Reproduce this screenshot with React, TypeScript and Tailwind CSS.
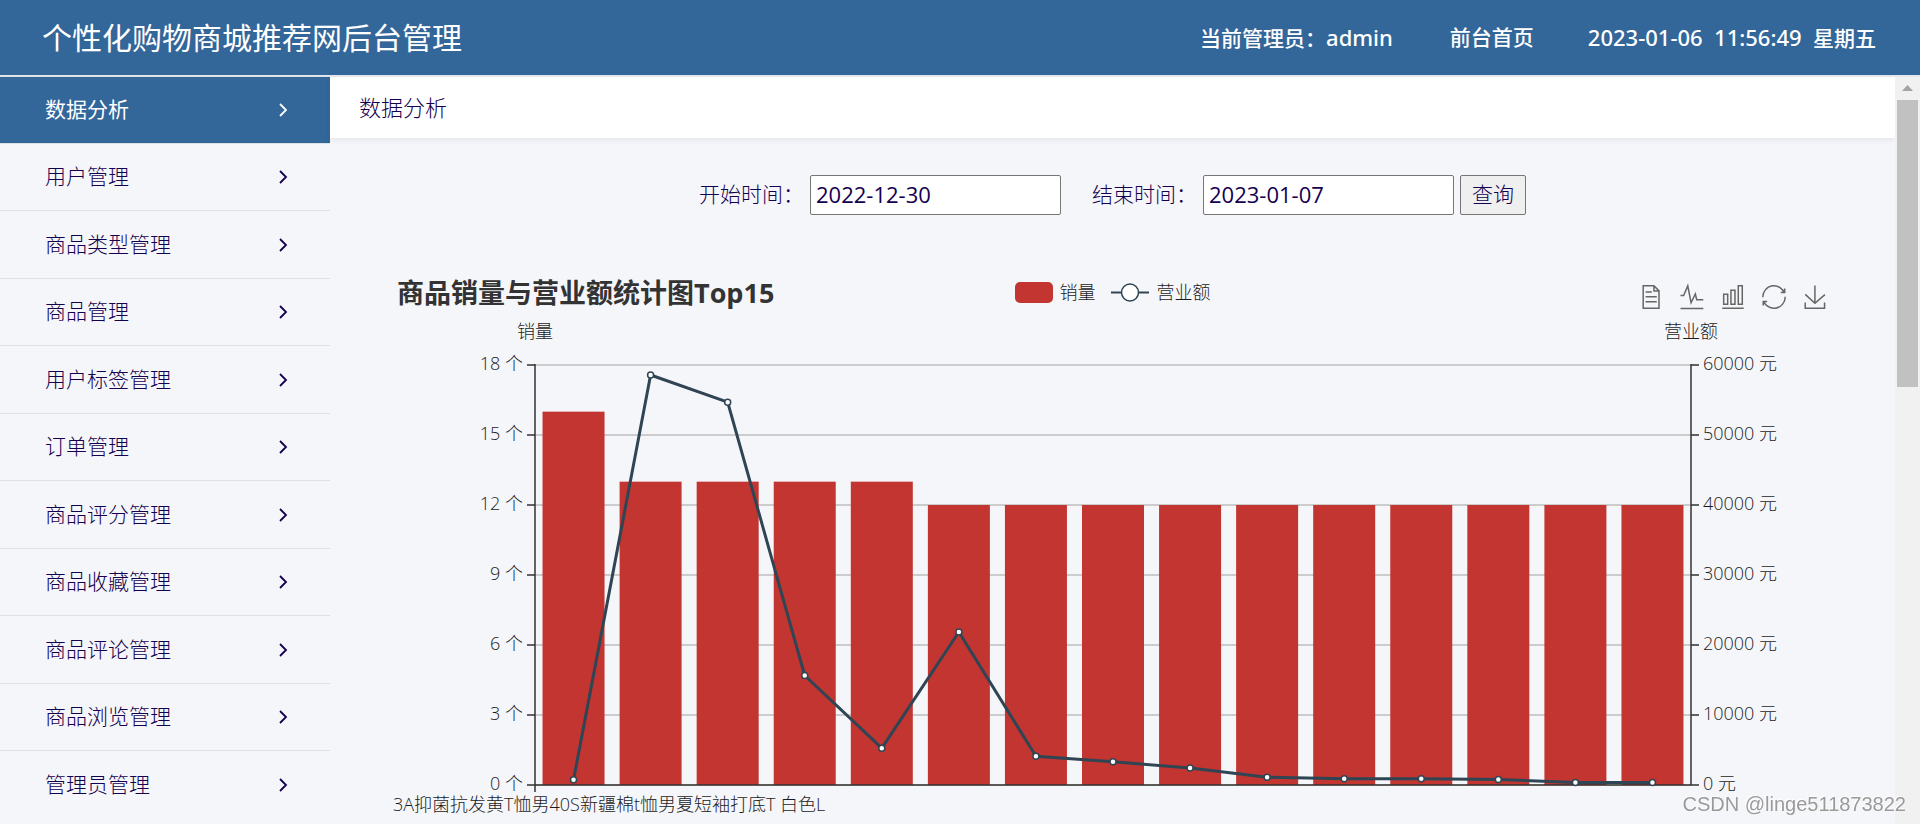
import { useState } from 'react';

const menu = [
    '数据分析',
    '用户管理',
    '商品类型管理',
    '商品管理',
    '用户标签管理',
    '订单管理',
    '商品评分管理',
    '商品收藏管理',
    '商品评论管理',
    '商品浏览管理',
    '管理员管理',
];

const sales = [16, 13, 13, 13, 13, 12, 12, 12, 12, 12, 12, 12, 12, 12, 12];
const revenue = [740, 58570, 54690, 15640, 5260, 21860, 4110, 3310, 2430, 1110, 890, 890, 790, 360, 350];

// plot area inside the svg
const LEFT = 145;
const RIGHT = 1301;
const TOP = 46;
const BOTTOM = 466;
const SLOT = (RIGHT - LEFT) / sales.length;
const BAR = 62;

const tools = [
    { name: '数据视图', box: '1 0 60 60', path: 'M17.5,17.3H33 M45.4,29.5h-28 M11.5,2v56H51V14.8L38.4,2H11.5z M38.4,2.2v12.7H51 M45.4,41.7h-28' },
    { name: '切换为折线图', box: '3 5 54 54', path: 'M4.1,28.9h7.1l9.3-22l7.4,38l9.7-19.7l3,12.8h14.9M4.1,58h51.4' },
    { name: '切换为柱状图', box: '0 0 60 60', path: 'M6.7,22.9h10V48h-10V22.9zM24.9,13h10v35h-10V13zM43.2,2h10v46h-10V2zM3.1,58h53.7' },
    { name: '还原', box: '0 0 60 60', path: 'M47,18.9h9.8V8.7 M56.3,20.1C52.1,9,40.5,0.6,26.8,2.1C12.6,3.7,1.6,16.2,2.1,30.6 M13,41.1H3.1v10.2 M3.7,39.9c4.2,11.1,15.8,19.5,29.5,18c14.2-1.6,25.2-14.1,24.7-28.5' },
    { name: '保存为图片', box: '-1 -1 61 61', path: 'M4.7,22.9L29.3,45.5L54.7,23.4M4.6,43.6L4.6,58L53.8,58L53.8,43.6M29.3,45.1L29.3,0' },
];

function Header() {
    return (
        <header className="h-[75px] shrink-0 bg-[#336699] text-white flex items-center justify-between pl-[42px] pr-11">
            <h1 className="text-[30px] leading-none">个性化购物商城推荐网后台管理</h1>
            <div className="flex items-center text-[21px] leading-none whitespace-pre font-medium font-['Noto_Sans','Noto_Sans_CJK_SC',sans-serif]">
                <span>当前管理员：<span className="text-[22px]">admin</span></span>
                <a href="#" className="ml-[57px]">前台首页</a>
                <span className="ml-[54px]"><span className="text-[22px]">2023-01-06  11:56:49  </span>星期五</span>
            </div>
        </header>
    );
}

function Sidebar({ active, setActive }: { active: number, setActive: (i: number) => void }) {
    return (
        <nav className="w-[330px] shrink-0 -mt-px">
            <ul>
                {menu.map((m, i) => (
                    <li key={m} className="h-[67px] odd:h-[68px] border-b border-[#dbe2e7] first:border-t last:border-b-0">
                        <a
                            href="#"
                            onClick={() => setActive(i)}
                            className={`h-full flex items-center justify-between pl-[45px] pr-10 text-[21px] ${i === active ? 'bg-[#336699] text-white' : 'font-light text-[#14004f]'}`}
                        >
                            {m}
                            <svg width="14" height="18" viewBox="0 0 14 18" fill="none" stroke="currentColor" strokeWidth="1.8">
                                <path d="M4 3L10 9L4 15" />
                            </svg>
                        </a>
                    </li>
                ))}
            </ul>
        </nav>
    );
}

function Filter() {
    const [from, setFrom] = useState('2022-12-30');
    const [to, setTo] = useState('2023-01-07');
    const field = 'w-[251px] h-10 ml-1.5 px-[5px] pb-0.5 bg-white border border-[#767676] rounded-xs text-[22px] font-normal';
    return (
        <form onSubmit={e => e.preventDefault()} className="mt-[37px] flex justify-center items-center text-[21px] font-light text-[#14004f]">
            <label htmlFor="from">开始时间：</label>
            <input id="from" value={from} onChange={e => setFrom(e.target.value)} className={field} />
            <label htmlFor="to" className="ml-[31px]">结束时间：</label>
            <input id="to" value={to} onChange={e => setTo(e.target.value)} className={field} />
            <button className="h-10 w-[66px] ml-1.5 bg-[#efefef] border border-[#767676] rounded-xs">查询</button>
        </form>
    );
}

function Chart() {
    const y = (v: number, max: number) => BOTTOM - (v / max) * (BOTTOM - TOP);
    const points = revenue.map((v, i) => [LEFT + SLOT * (i + 0.5), y(v, 60000)]);
    const ticks = [0, 1, 2, 3, 4, 5, 6];
    return (
        <section className="mt-[59px] px-[60px] text-[#1c1c1c] font-light">
            <div className="h-[45px] pt-1 px-[7px] grid grid-cols-[1fr_auto_1fr] items-start">
                <h2 className="text-[27px] leading-[30px] font-bold text-[#333]">商品销量与营业额统计图Top15</h2>
                <div className="h-7 flex items-center text-[18px]">
                    <span className="w-[38px] h-[21px] rounded-[5px] bg-[#c23531]"></span>
                    <span className="ml-[7px]">销量</span>
                    <svg className="ml-[15px]" width="38" height="21" viewBox="0 0 38 21" stroke="#2f4554">
                        <path d="M0 10.5H38" strokeWidth="2" />
                        <circle cx="19" cy="10.5" r="8.5" fill="#fff" strokeWidth="1.5" />
                    </svg>
                    <span className="ml-2">营业额</span>
                </div>
                <div className="flex justify-end gap-[17px] pt-[7px] pr-px">
                    {tools.map(t => (
                        <button key={t.name} aria-label={t.name}>
                            <svg width="24" height="24" viewBox={t.box} fill="none" stroke="#666" overflow="visible">
                                <path d={t.path} strokeWidth="1.5" vectorEffect="non-scaling-stroke" />
                            </svg>
                        </button>
                    ))}
                </div>
            </div>
            <svg viewBox="0 0 1445 555" className="w-full block" fontSize="18" fill="#1c1c1c">
                {ticks.map(t => (
                    <path key={t} d={`M${LEFT} ${BOTTOM - t * 70}H${RIGHT}`} stroke="#ccc" strokeWidth="2" />
                ))}
                {sales.map((v, i) => (
                    <rect key={i} x={LEFT + SLOT * i + (SLOT - BAR) / 2} y={y(v, 18)} width={BAR} height={BOTTOM - y(v, 18)} fill="#c23531" />
                ))}
                <g stroke="#333" strokeWidth="1.5">
                    <path d={`M${LEFT} ${TOP - 1}V${BOTTOM + 7}M${RIGHT} ${TOP - 1}V${BOTTOM}M${LEFT} ${BOTTOM}H${RIGHT}`} />
                    {ticks.map(t => (
                        <path key={t} d={`M${LEFT - 8} ${BOTTOM - t * 70}h8M${RIGHT} ${BOTTOM - t * 70}h8`} />
                    ))}
                </g>
                {ticks.map(t => (
                    <g key={t}>
                        <text x={LEFT - 12} y={BOTTOM - t * 70 + 5} textAnchor="end">{t * 3} 个</text>
                        <text x={RIGHT + 12} y={BOTTOM - t * 70 + 5}>{t * 10000} 元</text>
                    </g>
                ))}
                <text x={LEFT} y="19" textAnchor="middle">销量</text>
                <text x={RIGHT} y="19" textAnchor="middle">营业额</text>
                <text x="3" y="492">3A抑菌抗发黄T恤男40S新疆棉t恤男夏短袖打底T 白色L</text>
                <polyline points={points.map(p => p.join(',')).join(' ')} fill="none" stroke="#2f4554" strokeWidth="3" strokeLinejoin="bevel" />
                {points.map(([px, py]) => (
                    <circle key={px} cx={px} cy={py} r="3" fill="#fff" stroke="#2f4554" strokeWidth="1.5" />
                ))}
            </svg>
        </section>
    );
}

function ScrollBar() {
    return (
        <div className="w-[25px] shrink-0 bg-[#f1f1f1] px-0.5">
            <svg className="w-full h-[23px]" viewBox="0 0 21 23" fill="#a3a3a3">
                <path d="M5 14L10.5 8L16 14z" />
            </svg>
            <div className="h-[287px] bg-[#c1c1c1]"></div>
        </div>
    );
}

export default function App() {
    const [active, setActive] = useState(0);
    return (
        <div className="h-screen overflow-hidden flex flex-col bg-[#f5f6fa] font-['Open_Sans','Noto_Sans_CJK_SC',sans-serif]">
            <Header />
            <div className="flex flex-1 min-h-0 border-t-2 border-[#e6e8ee]">
                <Sidebar active={active} setActive={setActive} />
                <main className="flex-1 min-w-0">
                    <div className="h-[61px] bg-white shadow-[0_2px_6px_rgba(0,0,0,0.07)] pl-[29px] flex items-center text-[22px] font-light text-[#14004f]">{menu[active]}</div>
                    <Filter />
                    <Chart />
                </main>
                <ScrollBar />
            </div>
            <p className="fixed right-3.5 bottom-1.5 text-xl text-[#9a9a9a] font-['Liberation_Sans',sans-serif] [text-shadow:-1px_-1px_0_#fff]">CSDN @linge511873822</p>
        </div>
    );
}
